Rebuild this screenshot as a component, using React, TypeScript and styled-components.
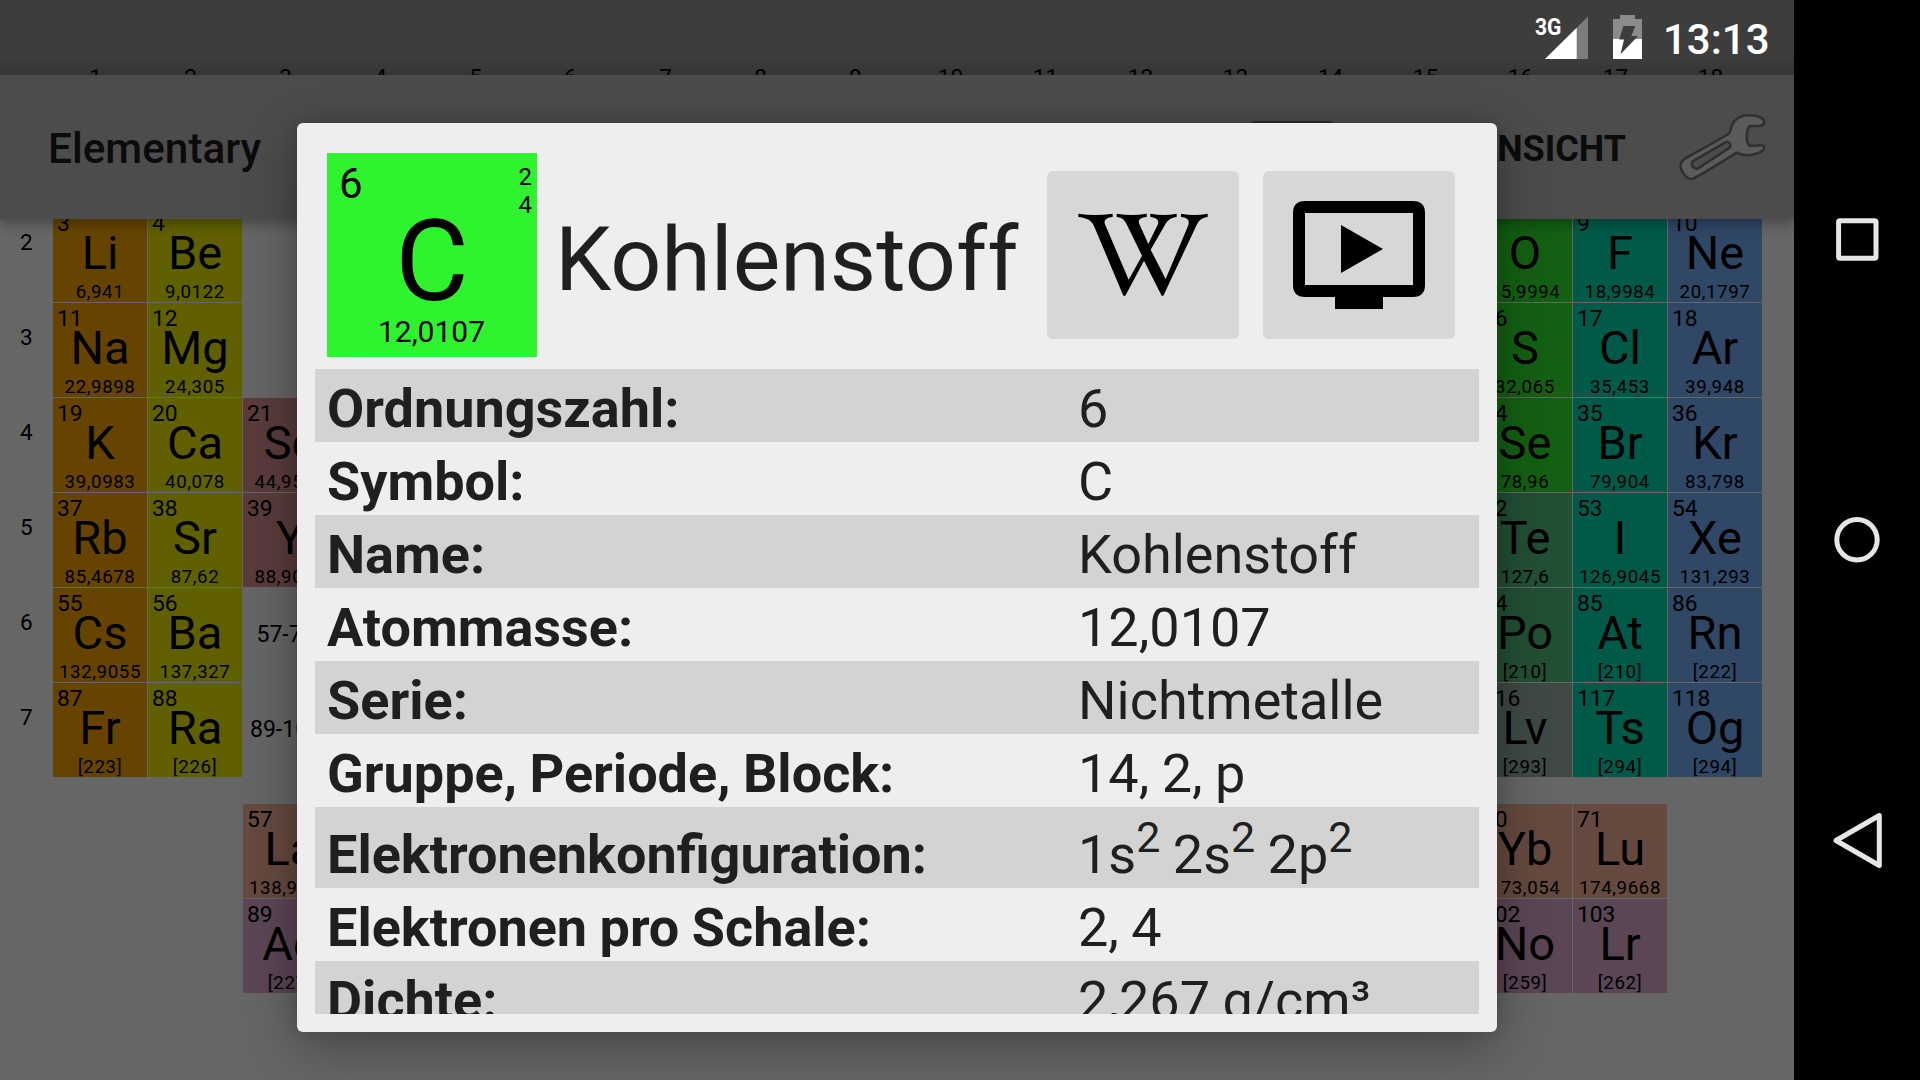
import React from 'react';
import styled, { createGlobalStyle } from 'styled-components';

const Global = createGlobalStyle`
  * { box-sizing: border-box; }
  body { margin: 0; background: #000; overflow: hidden; font-family: Roboto, "Liberation Sans", sans-serif; }
`;

const Device = styled.div`
  display: flex;
  width: 1920px;
  height: 1080px;
  overflow: hidden;
  background: #000;
`;

const Screen = styled.main`
  position: relative;
  width: 1794px;
  height: 1080px;
  overflow: hidden;
  background: #666;
  color: #000;
`;

const StatusBar = styled.header`
  position: absolute;
  inset: 0 0 auto 0;
  height: 75px;
  display: flex;
  justify-content: flex-end;
  padding-right: 24px;
  background: linear-gradient(#3d3d3d 0 58px, #353535);
`;

const StatusIcons = styled.svg`
  width: 130px;
  height: 75px;
`;

const Clock = styled.span`
  width: 106px;
  padding-right: 0.5px;
  display: flex;
  justify-content: flex-end;
  font-size: 42px;
  font-weight: 500;
  line-height: 79px;
  white-space: nowrap;
  color: #fff;
`;

const ColumnLabels = styled.div`
  position: absolute;
  top: 64px;
  left: 48px;
  height: 11px;
  overflow: hidden;
  display: grid;
  grid-template-columns: repeat(18, 95px);
  font-size: 22.5px;
  line-height: 26px;
  text-align: center;
`;

const AppBar = styled.div`
  position: absolute;
  top: 75px;
  left: 0;
  right: 0;
  height: 144px;
  display: flex;
  align-items: center;
  padding: 0 21px 0 48px;
  background: #4c4c4c;
  box-shadow: 0 5px 12px rgba(0, 0, 0, 0.3);
  color: #0b0b0b;
`;

const AppTitle = styled.h1`
  margin: 0;
  padding-top: 3px;
  flex: 1;
  font-size: 42.3px;
  font-weight: 500;
`;

const MenuIcon = styled.span`
  width: 82px;
  height: 52px;
  margin-right: 141px;
  border-radius: 3px;
  background: #2b2b2b;
`;

const MenuAction = styled.span`
  width: 152px;
  padding-top: 4px;
  font-size: 36px;
  font-weight: 700;
  margin-right: 51px;
  display: flex;
  justify-content: flex-end;
`;

const Wrench = styled.svg`
  width: 96px;
  height: 96px;
`;

const Board = styled.div`
  display: flex;
  padding-top: 208px;
`;

const PeriodLabels = styled.div`
  width: 53px;
  font-size: 22.5px;
`;

const PeriodLabel = styled.div`
  height: 95px;
  padding: 21px 0 0 20px;
  line-height: 26px;
`;

const Table = styled.div`
  display: grid;
  grid-template-columns: repeat(18, 94px);
  grid-template-rows: repeat(6, 94px) 25px repeat(2, 94px);
  gap: 1px;
`;

const Cell = styled.div<{ $row: number; $col: number; $bg: string }>`
  grid-row: ${(p) => p.$row};
  grid-column: ${(p) => p.$col};
  background: ${(p) => p.$bg};
  display: flex;
  flex-direction: column;
  align-items: center;
  overflow: hidden;
`;

const CellNumber = styled.span`
  align-self: flex-start;
  padding: 3px 0 0 4px;
  height: 21px;
  font-size: 22.8px;
  line-height: 26px;
`;

const CellSymbol = styled.span`
  height: 49px;
  font-size: 47px;
  line-height: 48px;
`;

const CellMass = styled.span`
  height: 24px;
  font-size: 18.7px;
  line-height: 29px;
  letter-spacing: 0.6px;
  white-space: nowrap;
`;

const RangeCell = styled.div<{ $row: number }>`
  grid-row: ${(p) => p.$row};
  grid-column: 3;
  padding: 34px 9px 0 0;
  font-size: 23px;
  line-height: 26px;
  text-align: center;
`;

const Dialog = styled.section`
  position: absolute;
  top: 123px;
  left: 297px;
  width: 1200px;
  height: 909px;
  padding: 30px 18px 18px;
  border-radius: 6px;
  background: #eee;
  color: #1f1f1f;
  box-shadow: 0 14px 56px rgba(0, 0, 0, 0.33), 0 0 16px rgba(0, 0, 0, 0.12);
`;

const DialogHead = styled.div`
  display: flex;
  height: 216px;
  padding: 0 24px 0 12px;
`;

const Tile = styled.div`
  width: 210px;
  height: 204px;
  display: grid;
  grid-template-columns: 1fr 1fr;
  grid-template-rows: 60px 98px 46px;
  background: #30f330;
  color: #000;
`;

const TileNumber = styled.span`
  padding: 6px 0 0 12px;
  font-size: 42px;
  line-height: 50px;
`;

const TileShells = styled.span`
  padding: 10px 5px 0 0;
  font-size: 24px;
  line-height: 28px;
  text-align: right;
`;

const TileSymbol = styled.span`
  grid-column: 1 / 3;
  font-size: 113px;
  line-height: 97px;
  text-align: center;
`;

const TileMass = styled.span`
  grid-column: 1 / 3;
  padding-right: 1px;
  font-size: 30px;
  line-height: 41px;
  text-align: center;
`;

const DialogTitle = styled.h2`
  margin: 0 0 0 18px;
  flex: 1;
  font-size: 89.8px;
  font-weight: 400;
  line-height: 214px;
  white-space: nowrap;
`;

const HeadButton = styled.button`
  width: 192px;
  height: 168px;
  margin: 18px 0 0 24px;
  padding: 0;
  border: 0;
  border-radius: 6px;
  background: #d6d8d7;
  flex: none;
`;

const ButtonArt = styled.svg`
  display: block;
  width: 192px;
  height: 168px;
`;

const Properties = styled.dl`
  margin: 0;
  height: 645px;
  overflow: hidden;
  font-size: 54px;
  word-spacing: -1px;
`;

const Property = styled.div<{ $tall?: boolean }>`
  display: grid;
  grid-template-columns: 751px 1fr;
  height: ${(p) => (p.$tall ? 81 : 73)}px;
  padding: ${(p) => (p.$tall ? 11 : 3)}px 0 0 12px;
  line-height: 73px;
  white-space: nowrap;
  &:nth-child(odd) { background: #d3d3d3; }
`;

const Term = styled.dt`
  font-weight: 700;
`;

const Value = styled.dd`
  margin: 0;
`;

const Exponent = styled.span`
  position: relative;
  top: -21px;
  font-size: 43px;
  line-height: 0;
`;

const NavBar = styled.nav`
  width: 126px;
  height: 1080px;
  background: #000;
`;

const C = {
  alkali: '#664400',
  earth: '#606000',
  transition: '#5a3c3c',
  lanthanide: '#664a3f',
  actinide: '#5b4655',
  nonmetal: '#146113',
  halogen: '#005a4a',
  noble: '#304766',
  metalloid: '#225035',
  unknown: '#3f4a44',
};

type El = [number, string, string, number, number, string];

const elements: El[] = [
  [3, 'Li', '6,941', 1, 1, C.alkali],
  [4, 'Be', '9,0122', 1, 2, C.earth],
  [8, 'O', '15,9994', 1, 16, C.nonmetal],
  [9, 'F', '18,9984', 1, 17, C.halogen],
  [10, 'Ne', '20,1797', 1, 18, C.noble],
  [11, 'Na', '22,9898', 2, 1, C.alkali],
  [12, 'Mg', '24,305', 2, 2, C.earth],
  [16, 'S', '32,065', 2, 16, C.nonmetal],
  [17, 'Cl', '35,453', 2, 17, C.halogen],
  [18, 'Ar', '39,948', 2, 18, C.noble],
  [19, 'K', '39,0983', 3, 1, C.alkali],
  [20, 'Ca', '40,078', 3, 2, C.earth],
  [21, 'Sc', '44,9559', 3, 3, C.transition],
  [34, 'Se', '78,96', 3, 16, C.nonmetal],
  [35, 'Br', '79,904', 3, 17, C.halogen],
  [36, 'Kr', '83,798', 3, 18, C.noble],
  [37, 'Rb', '85,4678', 4, 1, C.alkali],
  [38, 'Sr', '87,62', 4, 2, C.earth],
  [39, 'Y', '88,9058', 4, 3, C.transition],
  [52, 'Te', '127,6', 4, 16, C.metalloid],
  [53, 'I', '126,9045', 4, 17, C.halogen],
  [54, 'Xe', '131,293', 4, 18, C.noble],
  [55, 'Cs', '132,9055', 5, 1, C.alkali],
  [56, 'Ba', '137,327', 5, 2, C.earth],
  [84, 'Po', '[210]', 5, 16, C.metalloid],
  [85, 'At', '[210]', 5, 17, C.halogen],
  [86, 'Rn', '[222]', 5, 18, C.noble],
  [87, 'Fr', '[223]', 6, 1, C.alkali],
  [88, 'Ra', '[226]', 6, 2, C.earth],
  [116, 'Lv', '[293]', 6, 16, C.unknown],
  [117, 'Ts', '[294]', 6, 17, C.halogen],
  [118, 'Og', '[294]', 6, 18, C.noble],
  [57, 'La', '138,9055', 8, 3, C.lanthanide],
  [70, 'Yb', '173,054', 8, 16, C.lanthanide],
  [71, 'Lu', '174,9668', 8, 17, C.lanthanide],
  [89, 'Ac', '[227]', 9, 3, C.actinide],
  [102, 'No', '[259]', 9, 16, C.actinide],
  [103, 'Lr', '[262]', 9, 17, C.actinide],
];

const properties: [string, React.ReactNode, boolean?][] = [
  ['Ordnungszahl:', '6'],
  ['Symbol:', 'C'],
  ['Name:', 'Kohlenstoff'],
  ['Atommasse:', '12,0107'],
  ['Serie:', 'Nichtmetalle'],
  ['Gruppe, Periode, Block:', '14, 2, p'],
  [
    'Elektronenkonfiguration:',
    <>
      1s<Exponent>2</Exponent> 2s<Exponent>2</Exponent> 2p<Exponent>2</Exponent>
    </>,
    true,
  ],
  ['Elektronen pro Schale:', '2, 4'],
  ['Dichte:', '2,267 g/cm³'],
];

export default function App() {
  return (
    <Device>
      <Global />
      <Screen>
        <Board>
          <PeriodLabels>
            {[2, 3, 4, 5, 6, 7].map((n) => (
              <PeriodLabel key={n}>{n}</PeriodLabel>
            ))}
          </PeriodLabels>
          <Table>
            {elements.map(([n, symbol, mass, row, col, bg]) => (
              <Cell key={n} $row={row} $col={col} $bg={bg}>
                <CellNumber>{n}</CellNumber>
                <CellSymbol>{symbol}</CellSymbol>
                <CellMass>{mass}</CellMass>
              </Cell>
            ))}
            <RangeCell $row={5}>57-71</RangeCell>
            <RangeCell $row={6}>89-103</RangeCell>
          </Table>
        </Board>
        <AppBar>
          <AppTitle>Elementary</AppTitle>
          <MenuIcon />
          <MenuAction>ANSICHT</MenuAction>
          <Wrench viewBox="561 297 288 288" fill="#5b5b5b" stroke="#2f2f2f" strokeWidth="7.5" strokeLinejoin="round">
            <path d="M822 360C812 350 790 345 770 346C745 348 728 364 723 384C721 397 719 400 711 405L590 473C572 483 568 493 574 509C580 525 594 540 608 536C622 531 702 482 740 458C755 466 775 468 795 462C812 458 826 450 822 439C818 432 800 439 778 437C768 425 767 395 778 378C795 378 818 381 822 370Z" />
            <path d="M608 484L706 427C716 422 725 432 719 443L628 503C616 511 600 499 608 484Z" fill="#4c4c4c" />
          </Wrench>
        </AppBar>
        <StatusBar>
          <StatusIcons viewBox="0 0 130 75">
            <text x="1" y="35" fontSize="24.5" fontWeight="700" fill="#fff" textLength="26.5" lengthAdjust="spacingAndGlyphs">3G</text>
            <path d="M11 59L54 16.5V59Z" fill="#7c7c7c" />
            <path d="M11 59L42.7 27.7V59Z" fill="#fff" />
            <path d="M79 19h7v-4h15v4h7v40H79z" fill="#8b8b8b" />
            <path d="M79 39h29v20H79z" fill="#fff" />
            <path d="M89.3 26H101.3L97.3 36H104L86.5 54.3L90 39.5H85.3Z" fill="#3d3d3d" />
          </StatusIcons>
          <Clock>13:13</Clock>
        </StatusBar>
        <ColumnLabels>
          {Array.from({ length: 18 }, (_, i) => (
            <span key={i}>{i + 1}</span>
          ))}
        </ColumnLabels>
        <Dialog>
          <DialogHead>
            <Tile>
              <TileNumber>6</TileNumber>
              <TileShells>
                2<br />4
              </TileShells>
              <TileSymbol>C</TileSymbol>
              <TileMass>12,0107</TileMass>
            </Tile>
            <DialogTitle>Kohlenstoff</DialogTitle>
            <HeadButton aria-label="Wikipedia">
              <ButtonArt viewBox="0 0 576 504">
                <path
                  d="M94 128Q145 136 197 128V138C180 140 169 146 174 160L245 326L285 254L240 162C232 145 224 140 209 138V128Q255 136 299 128V138C280 140 271 147 277 159L304 219L332 161C338 148 329 140 310 138V128Q350 136 389 128V138C374 140 364 145 355 160L311 236L356 324L423 165C430 148 421 140 402 138V128Q442 136 482 128V138C467 140 457 146 449 162L349 374H344L291 269L235 374H229L141 165C133 148 118 140 94 138Z"
                  fill="#000"
                />
              </ButtonArt>
            </HeadButton>
            <HeadButton aria-label="Video">
              <ButtonArt viewBox="0 0 192 168">
                <path
                  fillRule="evenodd"
                  d="M42 30H150Q162 30 162 42V114Q162 126 150 126H120V138H72V126H42Q30 126 30 114V42Q30 30 42 30ZM42 42V114H150V42Z"
                />
                <path d="M78 54L120 78L78 102Z" />
              </ButtonArt>
            </HeadButton>
          </DialogHead>
          <Properties>
            {properties.map(([term, value, tall]) => (
              <Property key={term} $tall={tall}>
                <Term>{term}</Term>
                <Value>{value}</Value>
              </Property>
            ))}
          </Properties>
        </Dialog>
      </Screen>
      <NavBar>
        <svg width="126" height="1080" viewBox="0 0 126 1080" fill="none" stroke="#e6e6e6" strokeWidth="5">
          <rect x="44.6" y="220.8" width="37.4" height="37.4" rx="1.5" />
          <circle cx="63" cy="539.8" r="20.2" />
          <path d="M42 840.5L85.3 815.5V865.5Z" strokeLinejoin="round" />
        </svg>
      </NavBar>
    </Device>
  );
}
